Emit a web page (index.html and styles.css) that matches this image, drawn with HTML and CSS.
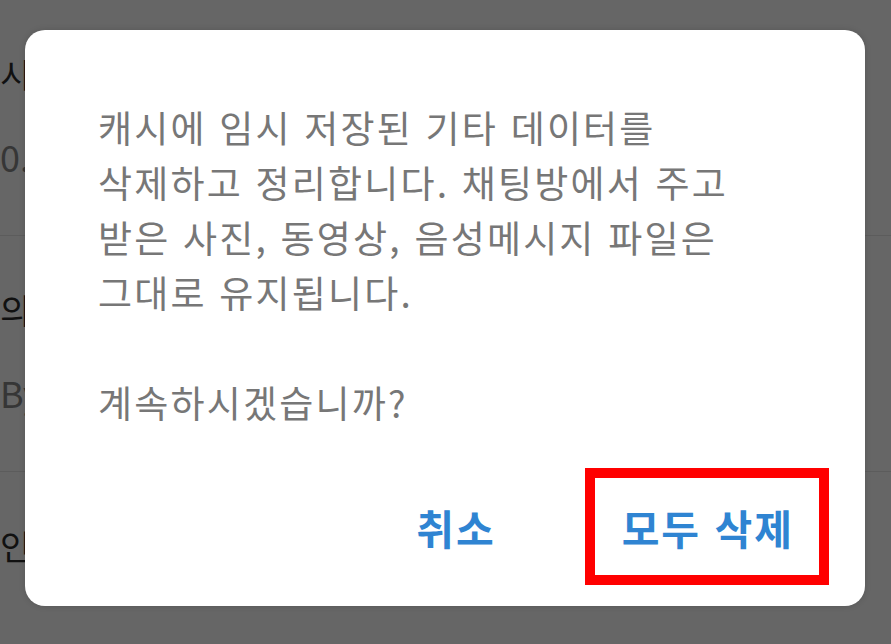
FILE: index.html
```html
<!DOCTYPE html>
<html lang="ko">
<head>
    <meta charset="UTF-8">
    <meta name="viewport" content="width=device-width, initial-scale=1.0">
    <title>저장공간 관리</title>
    <link rel="stylesheet" href="styles.css">
</head>
<body>
    <div id="settings-list">
        <div class="row">
            <div class="row-title">시스템 데이터 정리</div>
            <div class="row-sub">0.00 MB</div>
        </div>
        <div class="row">
            <div class="row-title">의 데이터 정리</div>
            <div class="row-sub">Bytes</div>
        </div>
        <div class="row last">
            <div class="row-title">인 데이터</div>
        </div>
    </div>

    <div id="dialog">
        <p class="message">캐시에 임시 저장된 기타 데이터를<br>삭제하고 정리합니다. 채팅방에서 주고<br>받은 사진, 동영상, 음성메시지 파일은<br>그대로 유지됩니다.<br><br>계속하시겠습니까?</p>
        <div class="actions">
            <button class="action">취소</button>
            <button class="action highlighted">모두 삭제</button>
        </div>
    </div>
</body>
</html>
```

FILE: styles.css
```css
body {
    margin: 0;
    height: 644px;
    overflow: hidden;
    background-color: #666666;
    font-family: "Noto Sans CJK KR", "Noto Sans", sans-serif;
}
#settings-list {
    display: flex;
    flex-direction: column;
}
.row {
    height: 236px;
    box-sizing: border-box;
    padding-top: 52px;
    border-bottom: 1px solid #5c5c5c;
    white-space: nowrap;
}
.row.last {
    height: auto;
    border-bottom: none;
}
.row-title {
    font-size: 34px;
    line-height: 44px;
    color: #111111;
}
.row-sub {
    margin-top: 38px;
    font-size: 36px;
    line-height: 44px;
    color: #363636;
}
#dialog {
    position: absolute;
    left: 25px;
    top: 30px;
    width: 840px;
    height: 576px;
    box-sizing: border-box;
    padding: 70px 36px 21px 73px;
    background-color: #FFFFFF;
    border-radius: 20px;
    box-shadow: 0 0 6px rgba(0, 0, 0, 0.15);
    display: flex;
    flex-direction: column;
}
.message {
    margin: 0;
    font-size: 37px;
    line-height: 55px;
    letter-spacing: 2.2px;
    color: #777777;
}
.actions {
    margin-top: auto;
    display: flex;
    justify-content: flex-end;
    gap: 54px;
}
.action {
    height: 117px;
    padding: 0 25px 0 27px;
    border: 10px solid transparent;
    background: none;
    font-family: inherit;
    font-size: 41px;
    font-weight: 700;
    letter-spacing: 2px;
    color: #2f84d2;
    cursor: pointer;
}
.action.highlighted {
    border-color: #FF0000;
}
```
